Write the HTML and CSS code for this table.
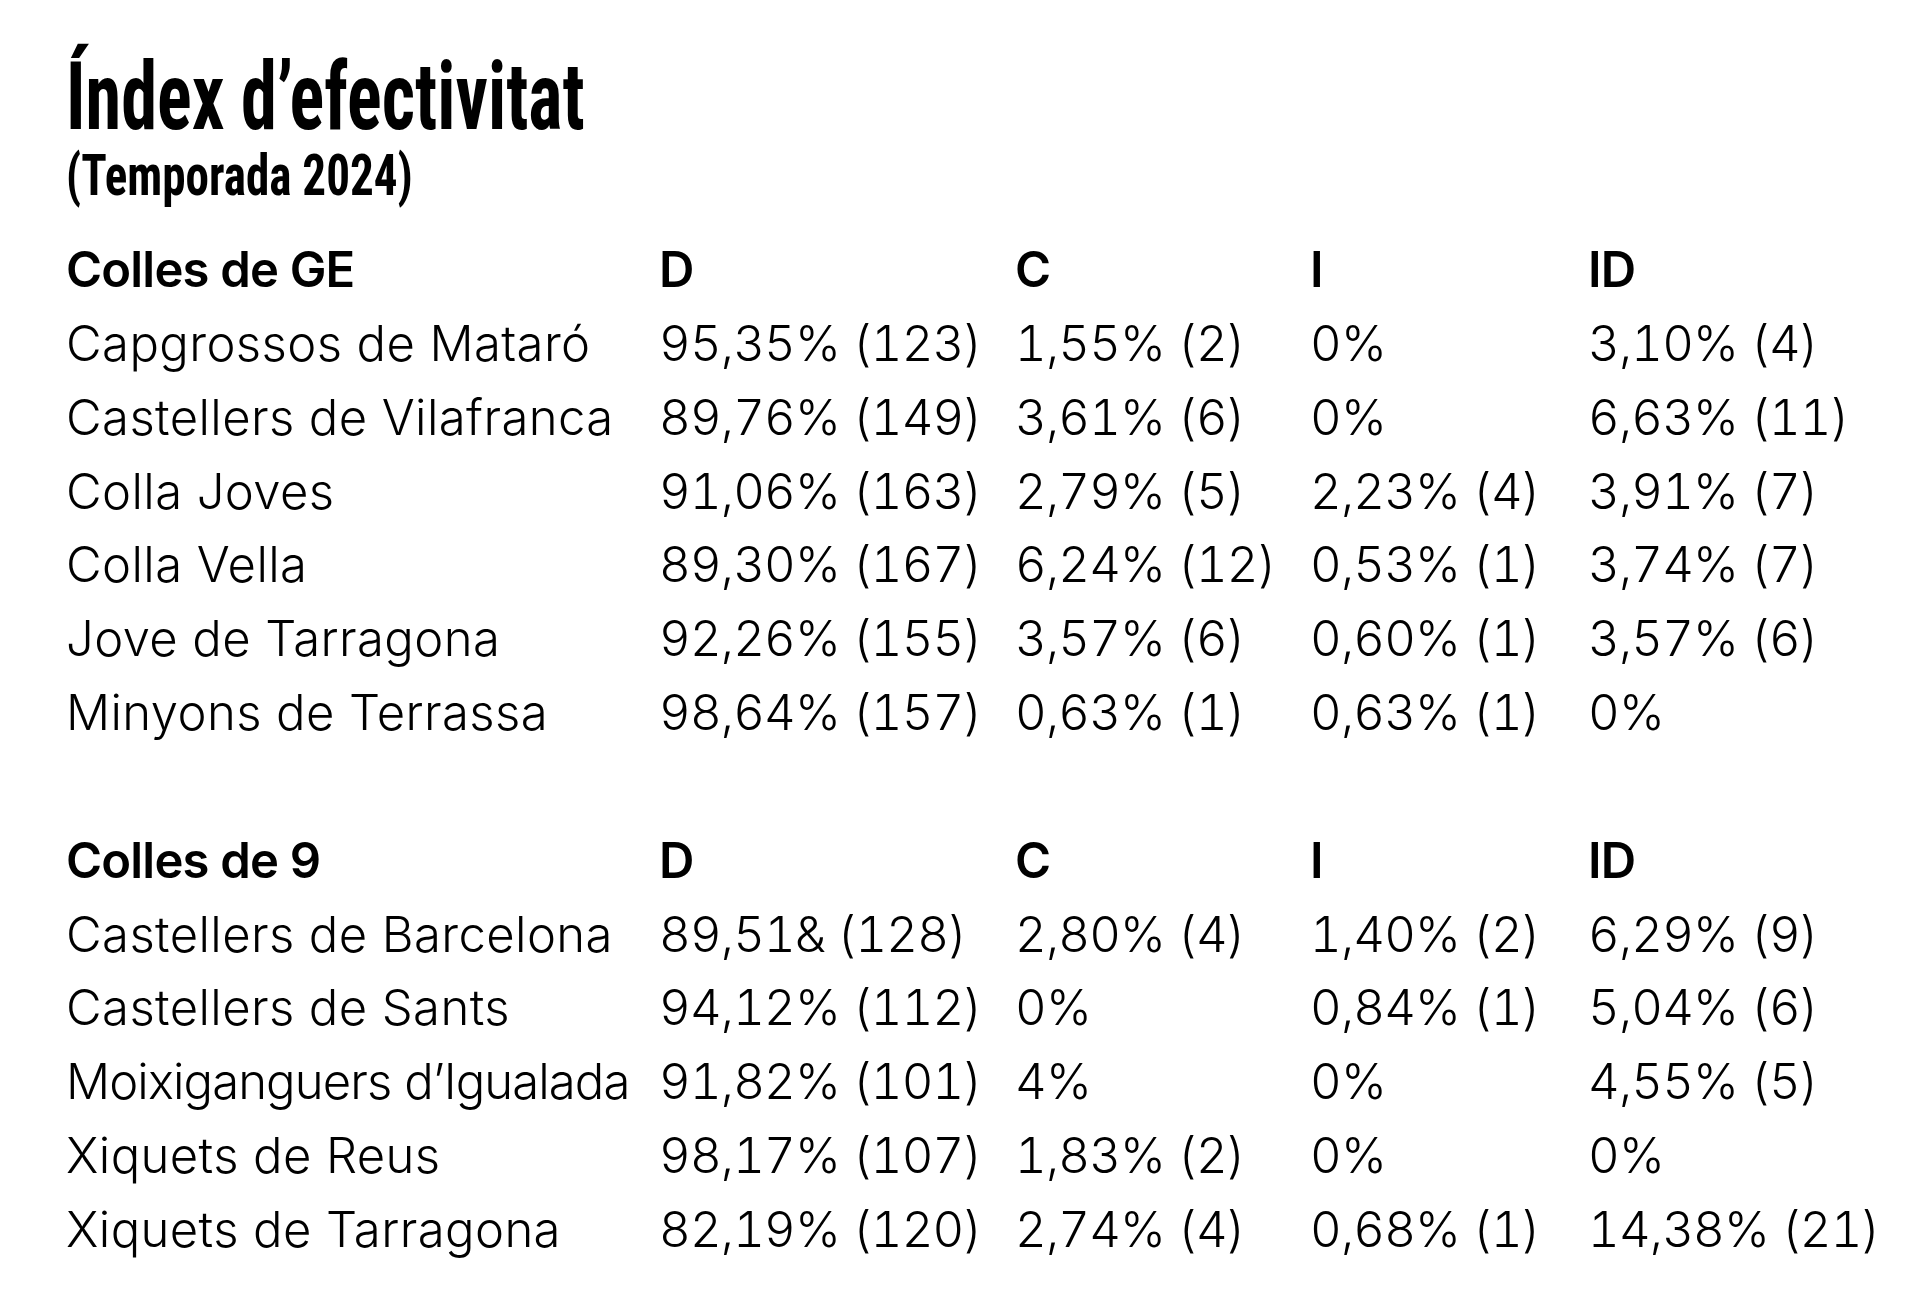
FILE: index.html
```html
<!DOCTYPE html>
<html lang="ca">
<head>
<meta charset="utf-8">
<title>Índex d’efectivitat</title>
<link rel="stylesheet" href="styles.css">
</head>
<body>
<main class="page">
  <header class="heading">
    <h1 class="title"><span class="squeeze-title">Índex d’efectivitat</span></h1>
    <p class="subtitle"><span class="squeeze-sub">(Temporada 2024)</span></p>
  </header>

  <section class="table">
    <div class="cell head">Colles de GE</div><div class="cell head">D</div><div class="cell head">C</div><div class="cell head">I</div><div class="cell head">ID</div>

    <div class="cell">Capgrossos de Mataró</div><div class="cell num">95,35% (123)</div><div class="cell num">1,55% (2)</div><div class="cell num">0%</div><div class="cell num">3,10% (4)</div>
    <div class="cell">Castellers de Vilafranca</div><div class="cell num">89,76% (149)</div><div class="cell num">3,61% (6)</div><div class="cell num">0%</div><div class="cell num">6,63% (11)</div>
    <div class="cell">Colla Joves</div><div class="cell num">91,06% (163)</div><div class="cell num">2,79% (5)</div><div class="cell num">2,23% (4)</div><div class="cell num">3,91% (7)</div>
    <div class="cell">Colla Vella</div><div class="cell num">89,30% (167)</div><div class="cell num">6,24% (12)</div><div class="cell num">0,53% (1)</div><div class="cell num">3,74% (7)</div>
    <div class="cell">Jove de Tarragona</div><div class="cell num">92,26% (155)</div><div class="cell num">3,57% (6)</div><div class="cell num">0,60% (1)</div><div class="cell num">3,57% (6)</div>
    <div class="cell">Minyons de Terrassa</div><div class="cell num">98,64% (157)</div><div class="cell num">0,63% (1)</div><div class="cell num">0,63% (1)</div><div class="cell num">0%</div>

    <div class="spacer"></div>

    <div class="cell head">Colles de 9</div><div class="cell head">D</div><div class="cell head">C</div><div class="cell head">I</div><div class="cell head">ID</div>

    <div class="cell">Castellers de Barcelona</div><div class="cell num">89,51&amp; (128)</div><div class="cell num">2,80% (4)</div><div class="cell num">1,40% (2)</div><div class="cell num">6,29% (9)</div>
    <div class="cell">Castellers de Sants</div><div class="cell num">94,12% (112)</div><div class="cell num">0%</div><div class="cell num">0,84% (1)</div><div class="cell num">5,04% (6)</div>
    <div class="cell tight">Moixiganguers d’Igualada</div><div class="cell num">91,82% (101)</div><div class="cell num">4%</div><div class="cell num">0%</div><div class="cell num">4,55% (5)</div>
    <div class="cell">Xiquets de Reus</div><div class="cell num">98,17% (107)</div><div class="cell num">1,83% (2)</div><div class="cell num">0%</div><div class="cell num">0%</div>
    <div class="cell">Xiquets de Tarragona</div><div class="cell num">82,19% (120)</div><div class="cell num">2,74% (4)</div><div class="cell num">0,68% (1)</div><div class="cell num">14,38% (21)</div>
  </section>
</main>
</body>
</html>
```

FILE: styles.css
```css
html, body {
  margin: 0;
  padding: 0;
  background: #ffffff;
  color: #000000;
}

.page {
  width: 1920px;
  height: 1307px;
  box-sizing: border-box;
  padding: 0 0 0 66px;
  overflow: hidden;
}

.heading {
  padding-top: 50px;
}

.title,
.subtitle {
  margin: 0;
  font-family: "Roboto Condensed", "Liberation Sans Narrow", "Liberation Sans", sans-serif;
  font-weight: 700;
  white-space: nowrap;
}

.title {
  font-size: 94px;
  line-height: 94px;
  height: 94px;
}

.subtitle {
  font-size: 57px;
  line-height: 57px;
  height: 57px;
  margin-top: 3px;
}

.squeeze-title,
.squeeze-sub {
  display: inline-block;
  transform-origin: left center;
}

.squeeze-title {
  transform: scaleX(0.77);
}

.squeeze-sub {
  transform: scaleX(0.826);
}

.table {
  margin-top: 29px;
  display: grid;
  grid-template-columns: 593px 356px 295px 278px auto;
  grid-auto-rows: 73.85px;
  font-family: Inter, "Liberation Sans", sans-serif;
  font-size: 49px;
  line-height: 73.85px;
  font-weight: 300;
  letter-spacing: 0.4px;
}

.cell {
  white-space: nowrap;
}

.num {
  font-variant-numeric: tabular-nums;
  letter-spacing: -0.8px;
}

.tight {
  letter-spacing: -0.9px;
}

.head {
  font-weight: 600;
  letter-spacing: -0.8px;
}

.spacer {
  grid-column: 1 / -1;
}
```
